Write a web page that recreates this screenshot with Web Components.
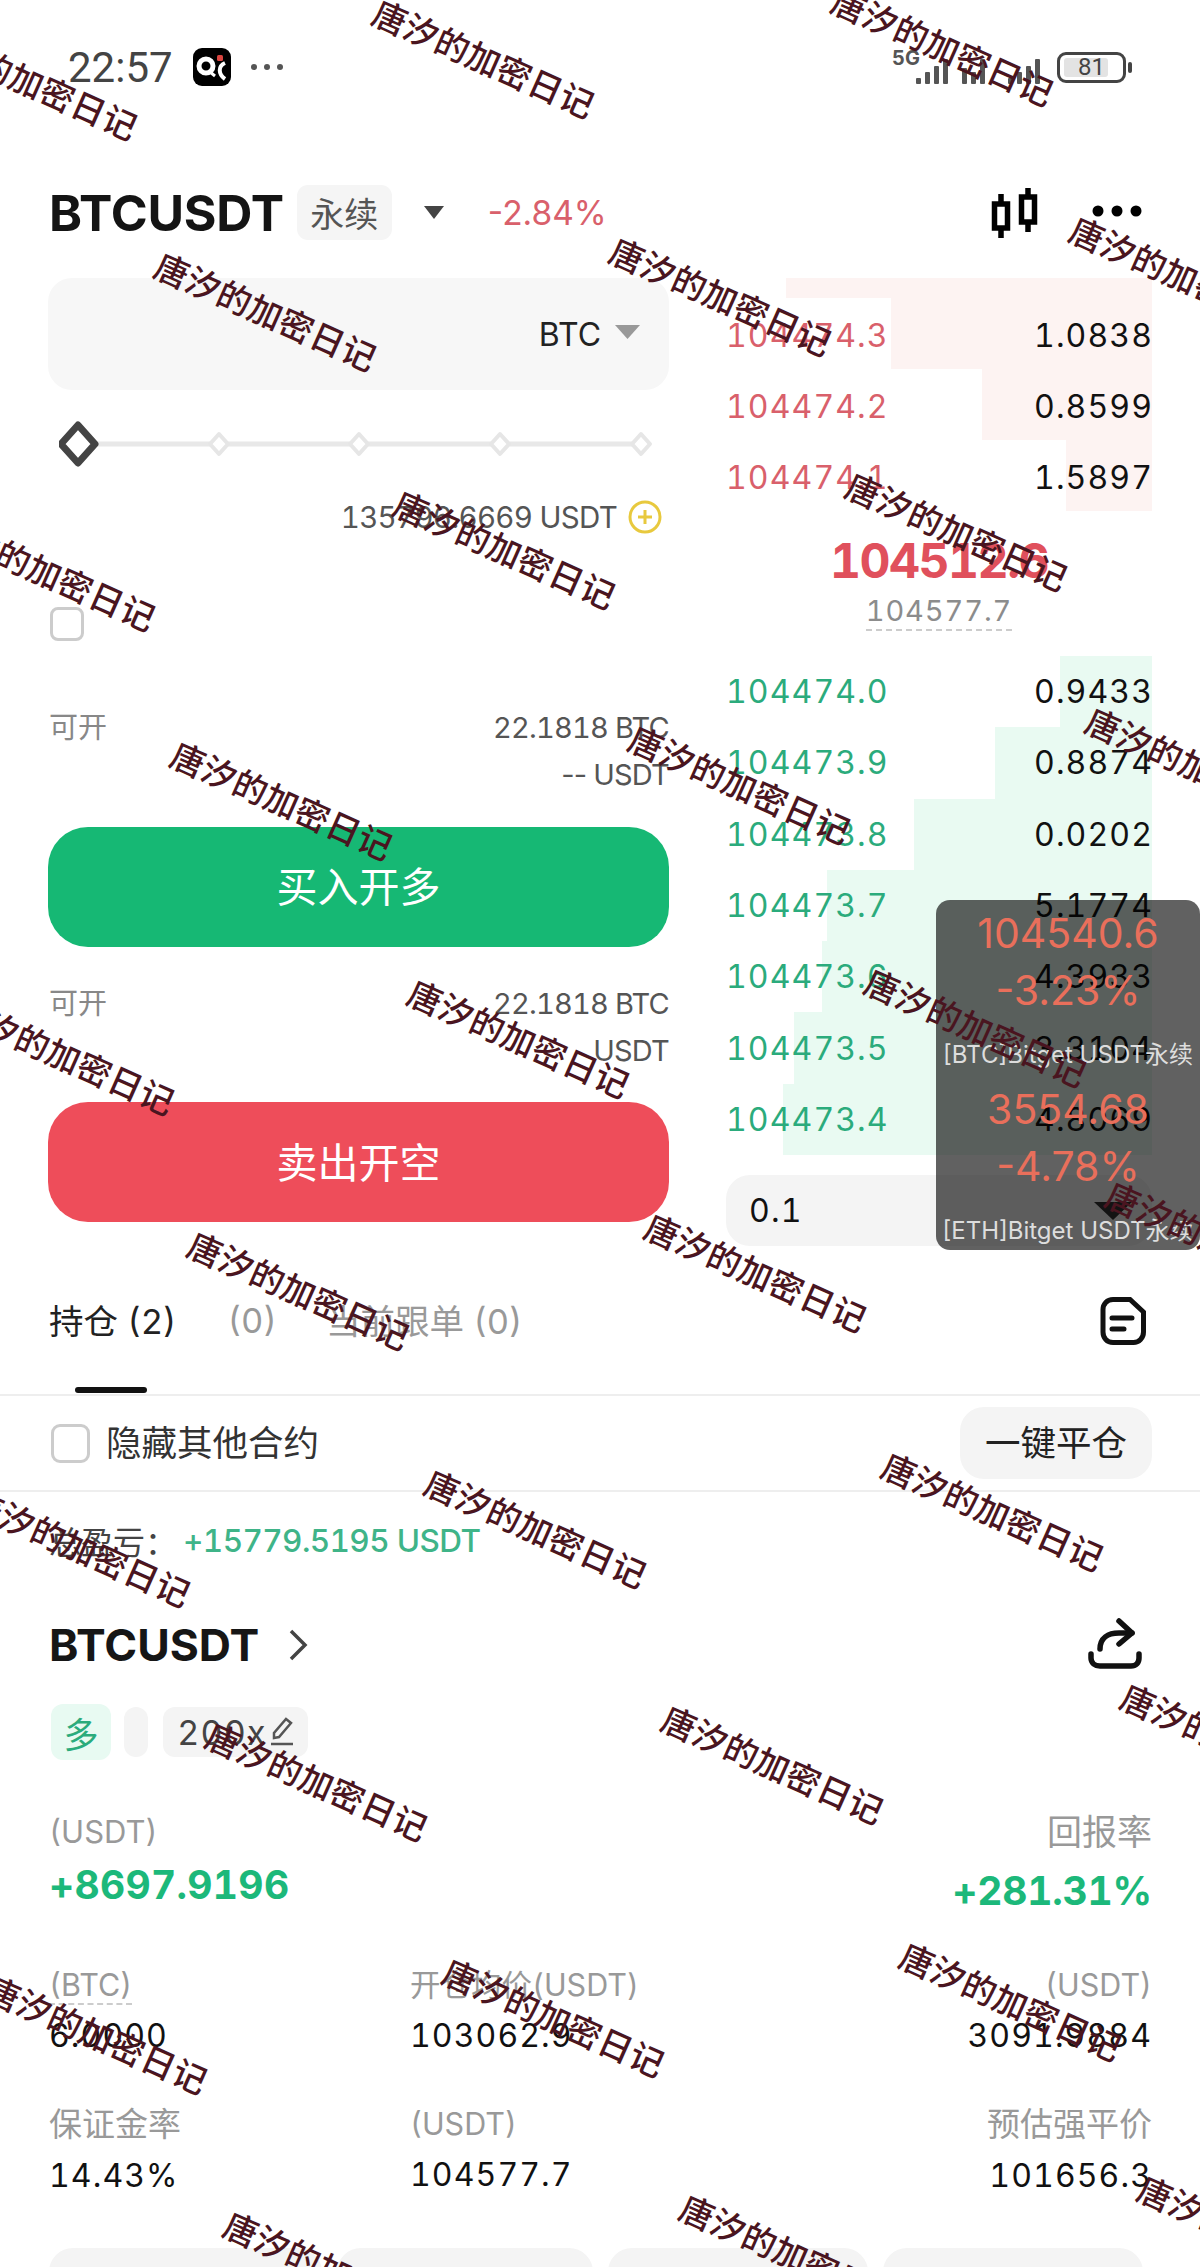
<!DOCTYPE html>
<html lang="zh">
<head>
<meta charset="utf-8">
<title>BTCUSDT</title>
<style>
    html, body { margin: 0; padding: 0; background: #fff; }
    body {
        width: 1200px;
        height: 2267px;
        overflow: hidden;
        position: relative;
        font-family: Inter, "Noto Sans CJK SC", sans-serif;
        font-variant-numeric: tabular-nums;
        color: #111;
    }
</style>
</head>
<body>
<x-status-bar></x-status-bar>
<x-ticker-header></x-ticker-header>
<x-trade-panel>
    <x-trade-form slot="form"></x-trade-form>
    <x-order-book slot="book">
        <x-book-row side="ask" bar="261" price="104474.3">1.0838</x-book-row>
        <x-book-row side="ask" bar="170" price="104474.2">0.8599</x-book-row>
        <x-book-row side="ask" bar="86" price="104474.1">1.5897</x-book-row>
        <x-book-row side="bid" bar="92" price="104474.0" slot="bids">0.9433</x-book-row>
        <x-book-row side="bid" bar="157" price="104473.9" slot="bids">0.8874</x-book-row>
        <x-book-row side="bid" bar="238" price="104473.8" slot="bids">0.0202</x-book-row>
        <x-book-row side="bid" bar="325" price="104473.7" slot="bids">5.1774</x-book-row>
        <x-book-row side="bid" bar="330" price="104473.6" slot="bids">4.3933</x-book-row>
        <x-book-row side="bid" bar="358" price="104473.5" slot="bids">3.3104</x-book-row>
        <x-book-row side="bid" bar="369" price="104473.4" slot="bids">4.8069</x-book-row>
    </x-order-book>
</x-trade-panel>
<x-position-tabs></x-position-tabs>
<x-position-card></x-position-card>
<x-price-float></x-price-float>
<x-watermarks></x-watermarks>

<script>
const tpl = html => {
    const template = document.createElement('template');
    template.innerHTML = html;
    return template;
};

class Base extends HTMLElement {
    constructor() {
        super();
        this.attachShadow({mode: 'open'}).appendChild(this.constructor.template.content.cloneNode(true));
    }
}

class StatusBar extends Base {
    static template = tpl(`
    <style>
        :host { display: flex; align-items: center; height: 134px; padding: 0 68px; box-sizing: border-box; color: #444; }
        .time { font: 400 42px Roboto, sans-serif; width: 125px; }
        .app { width: 38px; height: 38px; }
        .dots { width: 40px; height: 10px; margin-left: 18px; }
        .right { margin-left: auto; margin-right: 0; display: flex; align-items: center; }
        .net { width: 160px; height: 40px; margin-top: -3px; }
        .batt { position: relative; width: 69px; height: 31px; box-sizing: border-box; border: 3px solid #444; border-radius: 9px; margin-left: 11px; display: flex; align-items: center; justify-content: center; }
        .batt i { position: absolute; left: 4px; top: 3px; bottom: 3px; width: 44px; background: #e3e3e3; border-radius: 3px; }
        .batt span { position: relative; font: 400 24px Roboto, sans-serif; }
        .nub { width: 4px; height: 11px; background: #444; border-radius: 2px; margin-left: 2px; }
    </style>
    <span class="time">22:57</span>
    <svg class="app" viewBox="0 0 38 38">
        <rect width="38" height="38" rx="9" fill="#000"/>
        <circle cx="13" cy="18" r="7" fill="none" stroke="#fff" stroke-width="5"/>
        <path d="M17 24 L22 28" stroke="#fff" stroke-width="3"/>
        <path d="M32 15 C25 18 25 26 32 31" fill="none" stroke="#fff" stroke-width="4"/>
        <rect x="24" y="7" width="6" height="6" rx="1.5" fill="#d9443f"/>
    </svg>
    <svg class="dots" viewBox="0 0 40 10">
        <circle cx="5" cy="5" r="3" fill="#555"/><circle cx="18" cy="5" r="3" fill="#555"/><circle cx="31" cy="5" r="3" fill="#555"/>
    </svg>
    <div class="right">
        <svg class="net" viewBox="-14 0 160 40">
            <text x="-8" y="19" font-family="Inter, sans-serif" font-size="20" font-weight="700" fill="#555">5G</text>
            <g fill="#555">
                <rect x="16" y="32" width="5" height="6" rx="1"/><rect x="25" y="26" width="5" height="12" rx="1"/><rect x="34" y="20" width="5" height="18" rx="1"/><rect x="43" y="13" width="5" height="25" rx="1"/>
                <rect x="62" y="22" width="5" height="16" rx="1"/><rect x="71" y="26" width="5" height="12" rx="1"/><rect x="80" y="13" width="5" height="25" rx="1"/>
                <rect x="108" y="32" width="5" height="6" rx="1"/><rect x="117" y="26" width="5" height="12" rx="1"/><rect x="126" y="20" width="5" height="18" rx="1"/><rect x="135" y="13" width="5" height="25" rx="1"/>
            </g>
        </svg>
        <div class="batt"><i></i><span>81</span></div><div class="nub"></div>
    </div>`);
}

class TickerHeader extends Base {
    static template = tpl(`
    <style>
        :host { display: flex; align-items: center; height: 55px; margin-top: 51px; padding: 0 58px 0 49px; }
        b { font-size: 50px; font-weight: 700; letter-spacing: -.2px; color: #141414; }
        .kind { margin-left: 13px; width: 95px; height: 55px; border-radius: 11px; background: #f5f5f5; color: #555; font-size: 34px; display: flex; align-items: center; justify-content: center; }
        .caret { width: 22px; height: 13px; margin-left: 31px; }
        .chg { margin-left: 43px; font-size: 33.5px; color: #d9606b; font-variant-numeric: normal; }
        .candle { width: 50px; height: 52px; margin-left: auto; }
        .more { width: 50px; height: 12px; margin-left: 52px; margin-top: -3px; }
    </style>
    <b>BTCUSDT</b>
    <span class="kind">永续</span>
    <svg class="caret" viewBox="0 0 22 13"><path d="M1 0 H21 L11 13 Z" fill="#444"/></svg>
    <span class="chg">-2.84%</span>
    <svg class="candle" viewBox="0 0 50 52" fill="none" stroke="#000" stroke-width="5.5">
        <rect x="4.5" y="17" width="13" height="24"/><path d="M11 7 V17 M11 41 V51"/>
        <rect x="31.5" y="10" width="13" height="25"/><path d="M38 1 V10 M38 35 V45"/>
    </svg>
    <svg class="more" viewBox="0 0 50 12"><circle cx="6" cy="6" r="5.5"/><circle cx="25" cy="6" r="5.5"/><circle cx="44" cy="6" r="5.5"/></svg>`);
}

class TradePanel extends Base {
    static template = tpl(`
    <style>
        :host { display: flex; margin-top: 38px; padding: 0 48px; justify-content: space-between; height: 970px; }
    </style>
    <slot name="form"></slot>
    <slot name="book"></slot>`);
}

class TradeForm extends Base {
    static template = tpl(`
    <style>
        :host { display: block; width: 621px; }
        .input { height: 112px; border-radius: 24px; background: #f7f7f7; display: flex; align-items: center; justify-content: flex-end; padding: 0 29px 0 0; font-size: 32px; color: #222; }
        .input svg { width: 25px; height: 14px; margin-left: 14px; margin-top: -4px; }
        .slider { display: block; width: 610px; height: 48px; margin: 30px 0 0 11px; }
        .avail { display: flex; align-items: center; justify-content: flex-end; height: 40px; margin-top: 29px; padding-right: 7px; font-size: 29.5px; letter-spacing: -.7px; color: #555; }
        .avail svg { width: 34px; height: 34px; margin-left: 11px; }
        .check { width: 34px; height: 34px; box-sizing: border-box; border: 3px solid #ccc; border-radius: 8px; margin: 70px 0 0 2px; }
        .rows { display: flex; justify-content: space-between; font-size: 29px; letter-spacing: -.8px; color: #555; line-height: 47px; text-align: right; }
        .rows > span { color: #888; padding-left: 1px; letter-spacing: 0; }
        .buy { margin-top: 63px; }
        .sell { margin-top: 33px; }
        .dd { font-variant-numeric: normal; }
        .btn { height: 120px; box-sizing: border-box; padding-bottom: 5px; border-radius: 40px; color: #fff; font-size: 41px; display: flex; align-items: center; justify-content: center; margin-top: 28.5px; }
        .g { background: #16b874; }
        .r { background: #ee4d5a; }
    </style>
    <div class="input">BTC<svg viewBox="0 0 25 14"><path d="M0 0 H25 L12.5 14 Z" fill="#999"/></svg></div>
    <svg class="slider" viewBox="0 0 610 48">
        <path d="M20 24 H584" stroke="#e8e8e8" stroke-width="5"/>
        <g fill="#fff" stroke="#e6e6e6" stroke-width="4" stroke-linejoin="round">
            <path d="M160 14 L169 24 L160 34 L151 24 Z"/><path d="M300 14 L309 24 L300 34 L291 24 Z"/><path d="M441 14 L450 24 L441 34 L432 24 Z"/><path d="M582 14 L591 24 L582 34 L573 24 Z"/>
        </g>
        <path d="M19 5 L36 24 L19 43 L2 24 Z" fill="#fff" stroke="#444" stroke-width="7" stroke-linejoin="round"/>
    </svg>
    <div class="avail">135796.6669 USDT
        <svg viewBox="0 0 34 34"><circle cx="17" cy="17" r="15" fill="#fff" stroke="#e8c93e" stroke-width="3"/><path d="M17 10 V24 M10 17 H24" stroke="#e8c93e" stroke-width="3"/></svg>
    </div>
    <div class="check"></div>
    <div class="rows buy"><span>可开</span><div>22.1818 BTC<br><i class="dd" style="font-style:normal">--</i> USDT</div></div>
    <div class="btn g">买入开多</div>
    <div class="rows sell"><span>可开</span><div>22.1818 BTC<br>USDT</div></div>
    <div class="btn r">卖出开空</div>`);
}

class OrderBook extends Base {
    static template = tpl(`
    <style>
        :host { display: block; width: 426px; }
        .top { height: 20px; margin-left: 60px; background: #fdf3f2; }
        .mid { height: 145px; box-sizing: border-box; padding-top: 25px; text-align: center; margin-left: 0; }
        .last { font-size: 48px; font-weight: 700; line-height: 50px; color: #e0505c; letter-spacing: -1.5px; }
        .mark { display: inline-block; font-size: 29px; line-height: 36px; color: #8c8c8c; border-bottom: 2px dashed #ccc; letter-spacing: .9px; margin-top: 7px; }
        .qty { height: 71px; margin-top: 20px; border-radius: 24px; background: #f4f4f4; display: flex; align-items: center; justify-content: space-between; padding: 0 20px 0 23px; font-size: 32px; letter-spacing: 1.2px; color: #111; }
        .qty svg { width: 38px; height: 18px; }
    </style>
    <div class="top"></div>
    <slot></slot>
    <div class="mid"><div class="last">104512.6</div><span class="mark">104577.7</span></div>
    <slot name="bids"></slot>
    <div class="qty">0.1<svg viewBox="0 0 38 18"><path d="M0 0 H38 L19 18 Z" fill="#333"/></svg></div>`);
}

class BookRow extends Base {
    static template = tpl(`
    <style>
        :host { display: flex; align-items: center; justify-content: space-between; box-sizing: border-box; height: 71.3px; font-size: 32px; letter-spacing: 1.1px; color: #111; background-repeat: no-repeat; background-position: right top; }
        :host([side="ask"]) { height: 71px; padding-top: 3px; }
        .p { color: var(--c); }
        .q { margin-right: -1px; }
    </style>
    <span class="p"></span><span class="q"><slot></slot></span>`);
    connectedCallback() {
        const ask = this.getAttribute('side') === 'ask';
        this.style.setProperty('--c', ask ? '#d9606b' : '#2bab7c');
        const tint = ask ? '#fdf3f2' : '#e9faf2';
        this.style.backgroundImage = `linear-gradient(${tint}, ${tint})`;
        this.style.backgroundSize = `${this.getAttribute('bar')}px 100%`;
        this.shadowRoot.querySelector('.p').textContent = this.getAttribute('price');
    }
}

class PositionTabs extends Base {
    static template = tpl(`
    <style>
        :host { display: block; position: relative; height: 242px; box-sizing: border-box; }
        .tabs { display: flex; align-items: center; height: 148px; box-sizing: border-box; padding: 0 54px 4px 49px; border-bottom: 2px solid #eee; font-size: 34.5px; color: #999; position: relative; }
        .tabs .on { color: #222; }
        .tabs span:nth-child(2) { margin: 3px 0 0 51px; }
        .tabs span:nth-child(3) { margin-left: 49px; }
        .tabs svg { width: 46px; height: 50px; margin-left: auto; margin-top: 3px; }
        .bar { position: absolute; left: 75px; bottom: 1px; width: 72px; height: 6px; border-radius: 3px; background: #111; }
        .filter { display: flex; align-items: center; height: 94px; padding: 0 48px 0 51px; border-bottom: 2px solid #eee; font-size: 35.5px; color: #333; }
        .filter .txt { margin-top: -5px; }
        .box { width: 39px; height: 39px; box-sizing: border-box; border: 3px solid #ccc; border-radius: 9px; margin-right: 16px; }
        .close { margin-left: auto; width: 192px; height: 72px; box-sizing: border-box; padding-bottom: 5px; border-radius: 24px; background: #f4f4f4; display: flex; align-items: center; justify-content: center; color: #222; }
    </style>
    <div class="tabs">
        <span class="on">持仓 (2)</span><span>(0)</span><span>当前跟单 (0)</span>
        <svg viewBox="0 0 46 50" fill="none" stroke="#111" stroke-width="5" stroke-linecap="round">
            <path d="M13 3.5 H30 L43.5 16 V36 C43.5 42 39 46.5 33.5 46.5 H13 C7 46.5 3 42 3 36 V13.5 C3 8 7 3.5 13 3.5 Z"/>
            <path d="M12 22 H32 M12 33 H24"/>
        </svg>
        <div class="bar"></div>
    </div>
    <div class="filter"><div class="box"></div><span class="txt">隐藏其他合约</span><div class="close">一键平仓</div></div>`);
}

class PositionStat extends Base {
    static template = tpl(`
    <style>
        :host { display: block; text-align: var(--align, left); }
        .l { font-size: 30.5px; line-height: 44px; color: #999; white-space: nowrap; }
        .v { font-size: 32px; line-height: 44px; color: #111; letter-spacing: 1.1px; margin-top: 7px; }
    </style>
    <div class="l"><slot name="label"></slot></div>
    <div class="v"><slot></slot></div>`);
}

class PositionCard extends Base {
    static template = tpl(`
    <style>
        :host { display: block; padding: 0 48px 0 49px; }
        .total { height: 96px; display: flex; align-items: center; font-size: 32px; color: #444; margin-top: 2px; }
        .total em { font-style: normal; font-weight: 500; font-size: 31.5px; letter-spacing: -.6px; color: #3fb488; margin-left: 6px; }
        .title { display: flex; align-items: center; height: 60px; margin-top: 27px; }
        .title b { font-size: 44.5px; font-weight: 700; color: #161616; }
        .title .chev { width: 20px; height: 32px; margin-left: 29px; }
        .title .share { width: 60px; height: 58px; margin-left: auto; margin-right: 8px; }
        .tags { display: flex; align-items: center; gap: 13px; margin-top: 29px; height: 56px; }
        .tag { background: #f4f4f4; border-radius: 12px; height: 50px; display: flex; align-items: center; justify-content: center; }
        .long { width: 60px; height: 56px; background: #e8faf2; color: #2bab7c; font-size: 35px; margin-left: 2px; }
        .blank { width: 24px; }
        .lev { width: 145px; font-size: 34px; letter-spacing: 1.2px; color: #444; gap: 3px; margin-left: 2px; }
        .lev svg { width: 24px; height: 30px; }
        .pnl { display: flex; justify-content: space-between; margin-top: 50px; }
        .pnl .r { text-align: right; }
        .pnl .l { font-size: 31px; line-height: 44px; color: #999; }
        .pnl .r .l { font-size: 35px; }
        .pnl .v { font-size: 39px; font-weight: 700; letter-spacing: .3px; line-height: 48px; color: #1cb87a; margin-top: 7px; }
        .pnl .r .v { margin-top: 13px; letter-spacing: -.2px; }
        .grid { display: grid; grid-template-columns: 361px 1fr auto; margin-top: 48px; row-gap: 44px; }
        .right { --align: right; }
        .cjk { font-size: 33px; }
        .btns { display: flex; gap: 15px; margin-top: 50px; }
        .btns div { height: 60px; border-radius: 24px; background: #f4f4f4; width: 260px; flex: none; }
        .btns div:first-child { width: 273px; }
        .btns div:nth-child(2) { width: 256px; }
    </style>
    <div class="total">总盈亏：<em>+15779.5195 USDT</em></div>
    <div class="title">
        <b>BTCUSDT</b>
        <svg class="chev" viewBox="0 0 20 32" fill="none" stroke="#444" stroke-width="3.5"><path d="M3 2 L17 16 L3 30"/></svg>
        <svg class="share" viewBox="0 0 60 58" fill="none" stroke="#111" stroke-width="5.5" stroke-linecap="round" stroke-linejoin="round">
            <path d="M35 5 L48 17 L35 28"/>
            <path d="M16 33 C16 22 24 17 35 17 H48"/>
            <path d="M7 38 V42 C7 47 11 50 16 50 H47 C52 50 55 47 55 42 V38"/>
        </svg>
    </div>
    <div class="tags">
        <div class="tag long">多</div>
        <div class="tag blank"></div>
        <div class="tag lev">200x
            <svg viewBox="0 0 24 30" fill="none" stroke="#555" stroke-width="2.5"><path d="M16 2 L21 6 L9 20 L4 21 L4 16 Z"/><path d="M1 27 H23"/></svg>
        </div>
    </div>
    <div class="pnl">
        <div><div class="l">(USDT)</div><div class="v">+8697.9196</div></div>
        <div class="r"><div class="l">回报率</div><div class="v">+281.31%</div></div>
    </div>
    <div class="grid">
        <x-stat><span slot="label" style="border-bottom:2px dashed #ccc">(BTC)</span>6.0000</x-stat>
        <x-stat><span slot="label">开仓均价(USDT)</span>103062.9</x-stat>
        <x-stat class="right"><span slot="label">(USDT)</span>3091.9884</x-stat>
        <x-stat><span slot="label" class="cjk">保证金率</span>14.43%</x-stat>
        <x-stat><span slot="label">(USDT)</span>104577.7</x-stat>
        <x-stat class="right"><span slot="label" class="cjk">预估强平价</span>101656.3</x-stat>
    </div>
    <div class="btns"><div></div><div></div><div></div><div></div></div>`);
}

// floating price widget from another app, sits over the order book
class PriceFloat extends Base {
    static template = tpl(`
    <style>
        :host { position: absolute; left: 936px; top: 900px; width: 264px; height: 350px; box-sizing: border-box; padding-top: 5px; border-radius: 14px; background: rgba(0,0,0,.62); text-align: center; color: #e96f5b; overflow: hidden; font-variant-numeric: normal; }
        .n { font-size: 41px; line-height: 57px; }
        .s { font-size: 24px; line-height: 36px; color: #ddd; white-space: nowrap; margin-top: 18px; }
        .c { margin-top: 8px; }
    </style>
    <div class="n">104540.6</div>
    <div class="n">-3.23%</div>
    <div class="s">[BTC]Bitget USDT永续</div>
    <div class="n c">3554.68</div>
    <div class="n">-4.78%</div>
    <div class="s">[ETH]Bitget USDT永续</div>`);
}

// centres as read off the 830px wide reference, scaled up in connectedCallback
const MARKS = [
    [335,40],[652,32],[19,55],
    [499,205],[184,215],[817,190],
    [662,367],[349,380],[31,395],
    [512,542],[195,553],[828,530],
    [675,710],[359,718],[44,730],
    [523,880],[207,892],[842,858],
    [687,1045],[371,1057],[55,1070],
    [535,1220],[219,1232],[852,1205],
    [699,1384],[383,1395],[67,1407],
    [547,1558],[232,1570],[864,1545]
];

class Watermarks extends Base {
    static template = tpl(`
    <style>
        :host { position: absolute; inset: 0; overflow: hidden; pointer-events: none; }
        span { position: absolute; font: 500 34px "Noto Sans CJK SC", sans-serif; line-height: 1; color: #4a1520; white-space: nowrap; transform: translate(-50%, -50%) rotate(24deg); }
    </style>`);
    connectedCallback() {
        const k = 1200 / 830;
        MARKS.forEach(([x, y]) => {
            const s = document.createElement('span');
            s.textContent = '唐汐的加密日记';
            s.style.left = (x * k) + 'px';
            s.style.top = (y * k) + 'px';
            this.shadowRoot.appendChild(s);
        });
    }
}

customElements.define('x-status-bar', StatusBar);
customElements.define('x-ticker-header', TickerHeader);
customElements.define('x-trade-panel', TradePanel);
customElements.define('x-trade-form', TradeForm);
customElements.define('x-order-book', OrderBook);
customElements.define('x-book-row', BookRow);
customElements.define('x-position-tabs', PositionTabs);
customElements.define('x-stat', PositionStat);
customElements.define('x-position-card', PositionCard);
customElements.define('x-price-float', PriceFloat);
customElements.define('x-watermarks', Watermarks);
</script>
</body>
</html>
